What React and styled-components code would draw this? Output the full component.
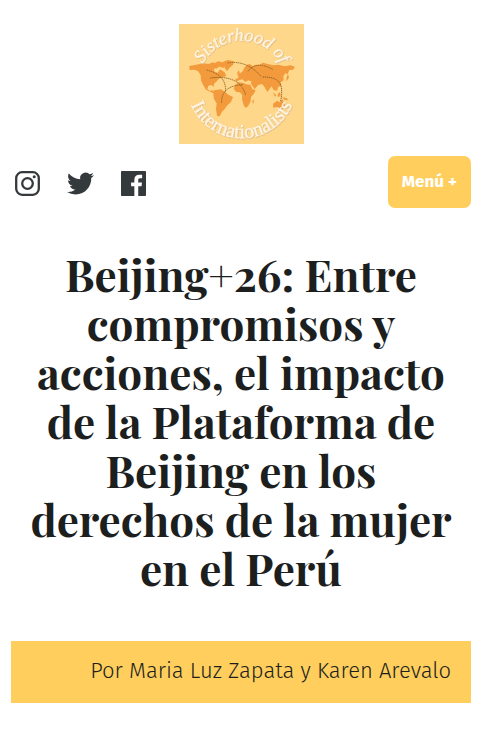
import React from "react";
import styled, { createGlobalStyle } from "styled-components";

const GlobalStyle = createGlobalStyle`
  * { box-sizing: border-box; }
  body {
    margin: 0;
    background: #fff;
    color: #1d1f1f;
    font-family: "Fira Sans", "Noto Sans", sans-serif;
  }
`;

const Page = styled.div`
  padding: 24px 11px 40px;
`;

const Header = styled.header`
  display: flex;
  flex-direction: column;
  gap: 12px;
`;

const LogoLink = styled.a`
  display: block;
  align-self: center;
  line-height: 0;
`;

const Toolbar = styled.div`
  display: flex;
  align-items: center;
  justify-content: space-between;
`;

const SocialList = styled.ul`
  display: flex;
  gap: 20px;
  margin: 0;
  padding: 2px 0 0;
  list-style: none;
`;

const SocialLink = styled.a`
  display: flex;
  align-items: center;
  justify-content: center;
  width: 33px;
  height: 33px;
  color: #343a3c;
`;

const MenuButton = styled.button`
  height: 52px;
  padding: 0 14px;
  border: 0;
  border-radius: 7px;
  background: #ffce5c;
  color: #fff;
  font: 700 17px/24px "Fira Sans", "Noto Sans", sans-serif;
  cursor: pointer;
`;

const Title = styled.h1`
  margin: 41px 0 49px;
  padding: 0 16px;
  font: 700 44px/49px "Playfair Display", "Liberation Serif", serif;
  text-align: center;
`;

const Byline = styled.p`
  margin: 0;
  padding: 13px 20px 15px;
  background: #ffce5c;
  font-size: 22px;
  font-weight: 300;
  line-height: 34px;
  text-align: right;
`;

const LogoText = styled.text`
  font-family: "Liberation Serif", serif;
  font-style: ${(p) => (p.$italic ? "italic" : "normal")};
  font-weight: 400;
  font-size: ${(p) => p.$size}px;
  fill: #fff4e2;
  stroke: #fff4e2;
  stroke-width: 1;
  filter: drop-shadow(2px 2px 1px #d9b887);
`;

function Logo() {
  return (
    <svg width="125" height="120" viewBox="12 12 375 360" role="img" aria-label="Sisterhood of Internationalists">
      <defs>
        <path id="arc-top" d="M67 195A133 133 0 0 1 333 195" />
        <path id="arc-bottom" d="M35 190A165 165 0 0 0 365 190" />
      </defs>
      <path d="M12 12H387V372H12Z" fill="#ffd78a" />
      <g fill="#f39a3d">
        <path d="M43 138L64 134 83 130 101 132 113 127 124 132 133 139 128 145 116 146 119 155 128 158 135 148 149 157 154 168 143 172 132 176 124 185 117 191 116 201 109 195 100 197 97 207 105 213 113 210 117 216 129 220 121 222 107 216 93 209 84 194 78 181 77 166 69 153 57 149 44 150Z" />
        <path d="M115 131L130 124 142 127 151 134 145 144 134 140 124 135ZM143 126L158 120 177 124 174 135 165 142 156 154 149 143Z" />
        <path d="M117 211L138 208 151 217 160 224 174 231 168 246 157 256 149 267 141 275 134 289 126 288 123 267 125 250 117 237 115 224Z" />
        <path d="M181 194L191 187 205 189 213 193 226 194 232 207 242 211 236 222 228 231 227 244 219 259 211 264 205 253 201 237 202 226 195 217 184 216 176 207Z" />
        <path d="M183 185L181 177 190 174 190 163 198 158 204 152 208 143 216 134 225 132 233 139 241 134 253 134 264 128 278 132 294 136 310 134 329 139 347 136 360 141 354 149 343 150 338 163 331 160 325 169 326 181 317 187 319 197 309 201 307 212 296 211 290 199 282 209 277 216 269 202 261 192 249 195 239 208 227 189 231 185 220 181 211 186 202 178 192 181Z" />
        <path d="M187 157L192 151 195 164 188 167ZM231 245L238 237 235 251ZM294 251L307 242 314 247 322 238 330 252 329 265 316 269 305 261 295 263ZM335 171L339 162 342 173 334 184ZM293 217L304 225 301 231ZM308 222L315 216 317 228 308 231ZM321 232L334 234 341 240 328 239Z" />
      </g>
      <g fill="none" stroke="#8d6527" strokeWidth="3" strokeDasharray="4 2">
        <path d="M95 150Q157 166 151 217M105 174Q196 163 212 226M140 248Q138 197 205 194M158 129Q214 119 259 170M219 154Q242 121 293 148M263 171C321 170 325 199 317 244" />
      </g>
      <LogoText $size={54} $italic textAnchor="middle">
        <textPath href="#arc-top" startOffset="50%">Sisterhood of</textPath>
      </LogoText>
      <LogoText $size={60} textAnchor="middle">
        <textPath href="#arc-bottom" startOffset="50%">Internationalists</textPath>
      </LogoText>
    </svg>
  );
}

function InstagramIcon() {
  return (
    <svg width="25" height="25" viewBox="0 0 25 25" aria-hidden="true">
      <rect x="1.2" y="1.2" width="22.6" height="22.6" rx="6" fill="none" stroke="currentColor" strokeWidth="2.3" />
      <circle cx="12.5" cy="12.5" r="5.3" fill="none" stroke="currentColor" strokeWidth="2.3" />
      <circle cx="19.2" cy="5.8" r="1.5" fill="currentColor" />
    </svg>
  );
}

function TwitterIcon() {
  return (
    <svg width="27" height="27" viewBox="0 0 24 24" fill="currentColor" aria-hidden="true">
      <path d="M23.953 4.57a10 10 0 0 1-2.825.775 4.958 4.958 0 0 0 2.163-2.723c-.951.555-2.005.959-3.127 1.184a4.92 4.92 0 0 0-8.384 4.482C7.69 8.095 4.067 6.13 1.64 3.162a4.822 4.822 0 0 0-.666 2.475c0 1.71.87 3.213 2.188 4.096a4.904 4.904 0 0 1-2.228-.616v.06a4.923 4.923 0 0 0 3.946 4.827 4.996 4.996 0 0 1-2.212.085 4.936 4.936 0 0 0 4.604 3.417 9.867 9.867 0 0 1-6.102 2.105c-.39 0-.779-.023-1.17-.067a13.995 13.995 0 0 0 7.557 2.209c9.053 0 13.998-7.496 13.998-13.985 0-.21 0-.42-.015-.63A9.935 9.935 0 0 0 24 4.59z" />
    </svg>
  );
}

function FacebookIcon() {
  return (
    <svg width="25" height="25" viewBox="3 3 18 18" fill="currentColor" aria-hidden="true">
      <path d="M20.3 3H3.7C3.3 3 3 3.3 3 3.7v16.6c0 .4.3.7.7.7h8.914v-6.971h-2.346v-2.717h2.346V9.31c0-2.325 1.42-3.591 3.494-3.591.993 0 1.847.074 2.096.107v2.43l-1.438.001c-1.128 0-1.346.536-1.346 1.323v1.734h2.69l-.35 2.717h-2.34V21H20.3c.4 0 .7-.3.7-.7V3.7c0-.4-.3-.7-.7-.7z" />
    </svg>
  );
}

const socialLinks = [
  { name: "Instagram", Icon: InstagramIcon },
  { name: "Twitter", Icon: TwitterIcon },
  { name: "Facebook", Icon: FacebookIcon },
];

export default function App() {
  return (
    <>
      <GlobalStyle />
      <Page>
        <Header>
          <LogoLink href="#">
            <Logo />
          </LogoLink>
          <Toolbar>
            <SocialList>
              {socialLinks.map(({ name, Icon }) => (
                <li key={name}>
                  <SocialLink href="#" aria-label={name}>
                    <Icon />
                  </SocialLink>
                </li>
              ))}
            </SocialList>
            <MenuButton type="button">Menú +</MenuButton>
          </Toolbar>
        </Header>
        <main>
          <Title>Beijing+26: Entre compromisos y acciones, el impacto de la Plataforma de Beijing en los derechos de la mujer en el Perú</Title>
          <Byline>Por Maria Luz Zapata y Karen Arevalo</Byline>
        </main>
      </Page>
    </>
  );
}
